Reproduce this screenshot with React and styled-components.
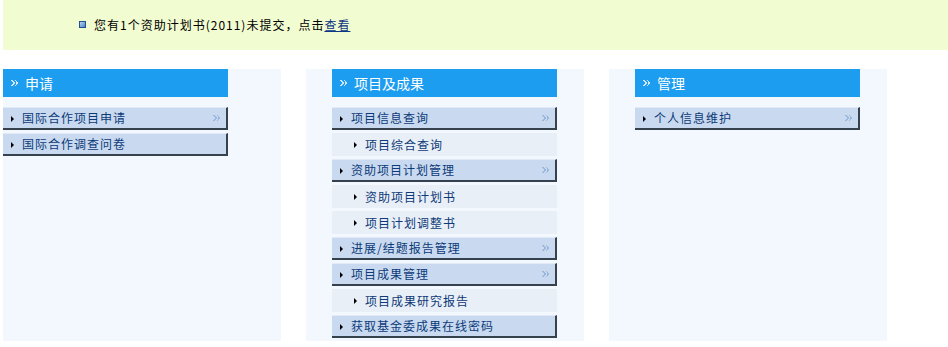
import React from 'react'
import styled, { createGlobalStyle } from 'styled-components'

const GlobalStyle = createGlobalStyle`
  body {
    margin: 0;
    background: #fff;
    font-family: "Noto Sans CJK SC", "Liberation Sans", sans-serif;
    font-size: 12px;
  }
`

const menus = [
  {
    title: '申请',
    align: 'left',
    items: [
      { label: '国际合作项目申请', more: true },
      { label: '国际合作调查问卷' },
    ],
  },
  {
    title: '项目及成果',
    align: 'center',
    items: [
      { label: '项目信息查询', more: true },
      { label: '项目综合查询', sub: true },
      { label: '资助项目计划管理', more: true },
      { label: '资助项目计划书', sub: true },
      { label: '项目计划调整书', sub: true },
      { label: '进展/结题报告管理', more: true },
      { label: '项目成果管理', more: true },
      { label: '项目成果研究报告', sub: true },
      { label: '获取基金委成果在线密码' },
    ],
  },
  {
    title: '管理',
    align: 'center',
    items: [{ label: '个人信息维护', more: true }],
  },
]

// small pixel "»" glyph used in headers and expandable rows
const DoubleChevron = ({ color }) => (
  <svg width="7" height="6" viewBox="0 0 7 6" shapeRendering="crispEdges">
    <g fill={color}>
      <rect x="0" y="0" width="2" height="1" />
      <rect x="1" y="1" width="2" height="1" />
      <rect x="2" y="2" width="2" height="2" />
      <rect x="1" y="4" width="2" height="1" />
      <rect x="0" y="5" width="2" height="1" />
      <rect x="4" y="0" width="1" height="1" />
      <rect x="5" y="1" width="1" height="1" />
      <rect x="5" y="2" width="2" height="2" />
      <rect x="5" y="4" width="1" height="1" />
      <rect x="4" y="5" width="1" height="1" />
    </g>
  </svg>
)

const App = () => (
  <Page>
    <GlobalStyle />
    <Notice>
      <Bullet />
      <span>
        您有1个资助计划书(2011)未提交，点击<a href="#">查看</a>
      </span>
    </Notice>
    <Columns>
      {menus.map((m) => (
        <Column key={m.title} $align={m.align}>
          <Menu>
            <Header>
              <DoubleChevron color="#cfe6fa" />
              <span>{m.title}</span>
            </Header>
            {m.items.map((it) => (
              <Item key={it.label} $sub={it.sub}>
                <Arrow />
                <ItemText>{it.label}</ItemText>
                {it.more && (
                  <More>
                    <DoubleChevron color="#9ab8de" />
                  </More>
                )}
              </Item>
            ))}
          </Menu>
        </Column>
      ))}
    </Columns>
  </Page>
)

const Page = styled.div`
  padding-left: 3px;
`

const Notice = styled.div`
  height: 50px;
  background: #f1fcd0;
  display: flex;
  align-items: center;
  padding-left: 76px;
  padding-bottom: 2px;
  box-sizing: border-box;
  color: #000;
  font-size: 12px;
  letter-spacing: 1px;

  a {
    color: #0b3783;
    text-decoration: underline;
  }
`

const Bullet = styled.i`
  width: 5px;
  height: 5px;
  border: 1px solid #24508c;
  background: linear-gradient(135deg, #b7d3f3, #4b82c8);
  margin-right: 8px;
`

const Columns = styled.div`
  display: flex;
  gap: 25px;
  margin-top: 19px;
`

const Column = styled.div`
  width: 278px;
  height: 272px;
  background: #f2f8fe;
  display: flex;
  padding-left: ${(p) => (p.$align === 'left' ? '0' : '26px')};
  box-sizing: border-box;
`

const Menu = styled.div`
  width: 225px;
  display: flex;
  flex-direction: column;
`

const Header = styled.div`
  height: 28px;
  background: #1c9def;
  color: #fff;
  font-size: 14px;
  display: flex;
  align-items: center;
  gap: 7px;
  padding-left: 8px;
  margin-bottom: 10px;
`

const Item = styled.div`
  height: ${(p) => (p.$sub ? '23px' : '20px')};
  display: flex;
  align-items: center;
  padding-left: ${(p) => (p.$sub ? '22px' : '8px')};
  margin-bottom: 3px;
  background: ${(p) => (p.$sub ? '#e9eff7' : '#c9daf0')};
  border-top: ${(p) => (p.$sub ? 'none' : '1px solid #e1eaf6')};
  border-right: ${(p) => (p.$sub ? 'none' : '2px solid #36414e')};
  border-bottom: ${(p) => (p.$sub ? 'none' : '2px solid #36414e')};
  color: #0d3a78;
`

const Arrow = styled.i`
  width: 0;
  height: 0;
  border-left: 3px solid #000;
  border-top: 3px solid transparent;
  border-bottom: 3px solid transparent;
  margin-right: 8px;
  margin-top: 1px;
`

const ItemText = styled.span`
  font-size: 12px;
  line-height: 1;
  letter-spacing: 1px;
`

const More = styled.span`
  margin-left: auto;
  margin-right: 6px;
  display: flex;
`

export default App
